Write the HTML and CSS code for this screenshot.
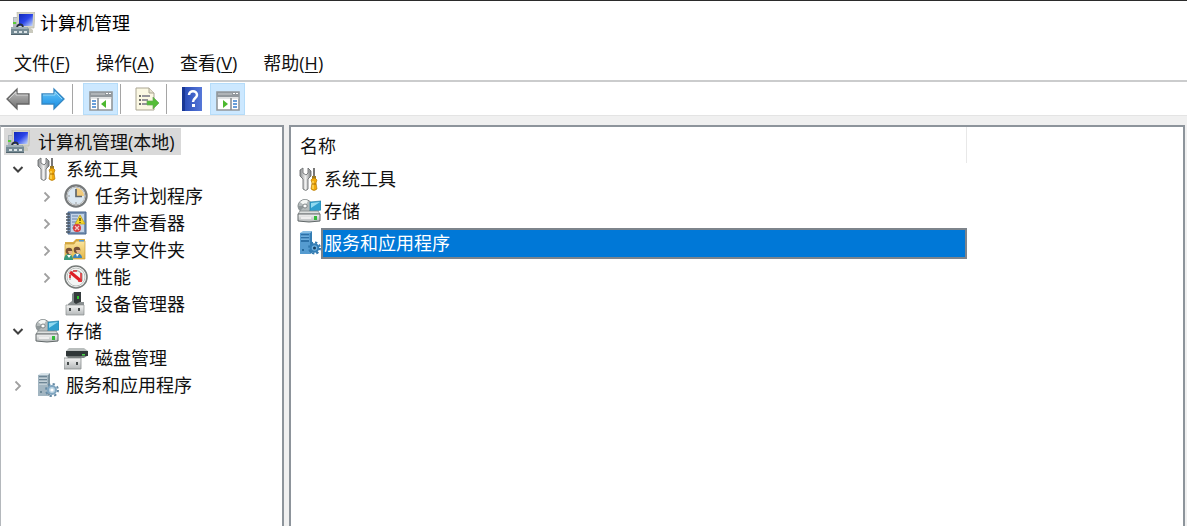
FILE: index.html
```html
<!DOCTYPE html>
<html lang="zh-CN">
<head>
<meta charset="utf-8">
<title>计算机管理</title>
<link rel="stylesheet" href="styles.css">
</head>
<body>
<svg class="defs" aria-hidden="true">
  <defs>
    <linearGradient id="gray" x1="0" y1="0" x2="0" y2="1"><stop offset="0" stop-color="#c4c4c4"/><stop offset="1" stop-color="#6d6d6d"/></linearGradient>
    <linearGradient id="blue" x1="0" y1="0" x2="0" y2="1"><stop offset="0" stop-color="#6cc8f8"/><stop offset="1" stop-color="#128be4"/></linearGradient>
    <linearGradient id="screen" x1="0" y1="0" x2="1" y2="1"><stop offset="0" stop-color="#1028b8"/><stop offset=".5" stop-color="#2b45e8"/><stop offset="1" stop-color="#c8dcff"/></linearGradient>
    <linearGradient id="steel" x1="0" y1="0" x2="1" y2="0"><stop offset="0" stop-color="#8b8e90"/><stop offset=".5" stop-color="#f1f1f1"/><stop offset="1" stop-color="#777b7d"/></linearGradient>
    <linearGradient id="case" x1="0" y1="0" x2="0" y2="1"><stop offset="0" stop-color="#f4f4f4"/><stop offset="1" stop-color="#b4b8b9"/></linearGradient>
    <linearGradient id="help" x1="0" y1="0" x2="1" y2="0"><stop offset="0" stop-color="#2447b4"/><stop offset="1" stop-color="#5677d8"/></linearGradient>
    <linearGradient id="folder" x1="0" y1="0" x2="0" y2="1"><stop offset="0" stop-color="#fbe6a0"/><stop offset="1" stop-color="#e5b749"/></linearGradient>
  </defs>
  <symbol id="i-computer" viewBox="0 0 24 24">
    <path d="M6 0h18l-1 16H7z" fill="#d5d4c8" stroke="#b2b1a6" stroke-width=".6"/>
    <path d="M8 2h14l-.5 12H8z" fill="url(#screen)"/>
    <path d="M2 5h4v11H2z" fill="#aeb5b9"/><path d="M3 7h3M3 9h3" stroke="#e2e7e9"/><path d="M2 10h3v2H2z" fill="#58cf35"/>
    <path d="M6 16c0-4 5-5 6-1" fill="none" stroke="#28313c" stroke-width="1.800"/>
    <path d="M13 15h5l4 3v3h-7z" fill="#c9c9bd"/>
    <path d="M0 15h16l2 2v6H0z" fill="#758a94"/><path d="M0 15h16l1 2H0z" fill="#9fb0b7"/>
    <path d="M3 19h3v2H3zM8 19h3v2H8zM13 19h3v2h-3z" fill="#dce4e6"/><path d="M0 22.500h18" stroke="#52656e"/>
  </symbol>
  <symbol id="i-tools" viewBox="0 0 24 24">
    <path d="M6 1 3 3v6l3 3v10q3 3 5 0V12l3-3V4l-3-3v5L9 8 6 6z" fill="url(#steel)" stroke="#6d7072" stroke-width=".9"/>
    <path d="M16 1h2v10h-2z" fill="#777"/><path d="M15 9h4v3h-4z" fill="#9b7b28"/>
    <path d="M14 13q3-4 6 0l-1 3 1 6q-3 3-6 0l1-6z" fill="#f2aa0b" stroke="#b47b08" stroke-width=".7"/><path d="M16 14v8" stroke="#ffe16b" stroke-width="1.300"/><path d="M15 17h4" stroke="#a96d00"/>
  </symbol>
  <symbol id="i-clock" viewBox="0 0 24 24">
    <circle cx="12" cy="12" r="10.600" fill="#f3f4f3" stroke="#777a7b" stroke-width="2.200"/><circle cx="12" cy="12" r="8.800" fill="#dce8f2" stroke="#b8babb"/>
    <path d="M12 4a8 8 0 0 1 8 8h-8z" fill="#f2cb7c"/><path d="M12 5v7.500h6" fill="none" stroke="#62676b" stroke-width="1.700"/><path d="M12 18v2M4 12h2" stroke="#999"/>
  </symbol>
  <symbol id="i-event" viewBox="0 0 24 24">
    <path d="M4 1h18v22H4z" fill="#7993b4" stroke="#44648e"/><path d="M7 3h13v18H7z" fill="#c3d4e9"/>
    <path d="M8 5h6M8 8h5M8 11h5M8 14h4M8 17h4" stroke="#6984aa"/>
    <path d="M2 3h4M2 6h4M2 9h4M2 12h4M2 15h4M2 18h4M2 21h4" stroke="#4b5560" stroke-width="1.300"/>
    <path d="m16 4 5 9H11z" fill="#f7d72c" stroke="#b59a14" stroke-width=".7"/><path d="M16 7v3M16 11v1" stroke="#54480b" stroke-width="1.400"/>
    <circle cx="13" cy="17" r="4" fill="#d83a3d"/><path d="m11 15 4 4m0-4-4 4" stroke="#f3c6c6" stroke-width="1.200"/>
  </symbol>
  <symbol id="i-share" viewBox="0 0 24 24">
    <path d="M1 4h8l3-3h9v20H1z" fill="#d9ad45"/><path d="M1 6h9l2-3h9v18H1z" fill="url(#folder)" stroke="#c79b37" stroke-width=".7"/><path d="M15 2h5v1.500h-5z" fill="#4f9bd8"/>
    <path d="M0 22c0-8 9-8 9 0z" fill="#3a9a7b"/><path d="M9 20c0-6 9-6 9 0z" fill="#3c83b8"/><circle cx="5" cy="13" r="3.300" fill="#765137"/><circle cx="13" cy="12" r="3.300" fill="#765137"/><path d="M4 13h4v3H5zM12 12h4v3h-3z" fill="#e9b68d"/><path d="m3 17 2 3 2-3M12 16l1 3 2-3" fill="#fff"/>
  </symbol>
  <symbol id="i-perf" viewBox="0 0 24 24">
    <circle cx="12" cy="12" r="11" fill="#fff" stroke="#777c7a" stroke-width="1.600"/><circle cx="12" cy="12" r="9" fill="#f4f6f4" stroke="#b9bebb"/>
    <path d="M6 15V9q6-7 12 0v7" fill="none" stroke="#9b9f9d" stroke-width="1.200"/>
    <path d="m6 7 11 9" stroke="#df1f25" stroke-width="3.200"/><path d="M6 10v3M9 6h4M17 8v9M14 16h4" stroke="#df3438" stroke-width="1.600"/>
  </symbol>
  <symbol id="i-device" viewBox="0 0 24 24">
    <path d="M10 0h7v13h-7z" fill="#353b3c"/><path d="M10 0 8 2v11h2z" fill="#80898a"/><path d="M13 4h2v3h-2z" fill="#2fc72b"/>
    <path d="m4 12 4-3 4 3v3H4zM12 12l4-2h4v5h-8z" fill="#8a9091"/><path d="M2 13h18v10H2z" fill="url(#case)" stroke="#888d8e" stroke-width=".7"/><path d="M5 16h2v3H5zM14 16h2v3h-2z" fill="#464b4c"/>
  </symbol>
  <symbol id="i-storage" viewBox="0 0 24 24">
    <ellipse cx="8" cy="7" rx="7" ry="6.500" fill="#b4babb" stroke="#858c8e"/><path d="M8 7 3 3q5-4 8-1z" fill="#f4f6f4"/><path d="m8 7-5 5q-2-2-2-5z" fill="#8f9799"/><ellipse cx="8" cy="7" rx="2.200" ry="2" fill="#fff" stroke="#7d8486"/>
    <path d="M13 3 24 2v9l-11 2z" fill="#2f9fce" stroke="#2a84a7" stroke-width=".7"/><path d="m14 4 9-1-9 6z" fill="#91daf0"/>
    <path d="m3 12-2 3h22l-2-3z" fill="#dce0df" stroke="#858c8b" stroke-width=".8"/><path d="M1 15h22v7q-11 2-22 0z" fill="url(#case)" stroke="#62696a"/><path d="M4 18h10v2H4z" fill="#eee"/><path d="M17 17h3v4h-3z" fill="#34b93b"/>
  </symbol>
  <symbol id="i-disk" viewBox="0 0 24 24">
    <path d="m5 2-3 3h22l-4-3z" fill="#b9bebd"/><path d="M2 5h22v5H2z" fill="#303738"/><path d="M2 10h21l-3 2H4z" fill="#7f8887"/><path d="M18 8h3v1.500h-3z" fill="#4bd44c"/>
    <path d="M4 10h13v4H4z" fill="#707675"/><path d="M0 12h17v11H0z" fill="url(#case)" stroke="#898e8d" stroke-width=".8"/><path d="M3 16h2v3H3zM12 16h2v3h-2z" fill="#454b4b"/>
  </symbol>
  <symbol id="i-service" viewBox="0 0 24 24">
    <path d="M3 2 6 0h9l-2 2z" fill="#d8e3e9"/><path d="M3 2h10v21H3z" fill="#a2b5c1"/><path d="m13 2 2-2v22l-2 1z" fill="#7c929e"/><path d="M4 4h8M4 7h8M4 10h8" stroke="#5c7686" stroke-width="1.300"/><path d="M4 5h8M4 8h8M4 11h8" stroke="#e0e9ed"/><path d="M5 18h2v2H5z" fill="#6b8796"/>
    <circle cx="17" cy="17" r="6" fill="none" stroke="#668ba5" stroke-width="2" stroke-dasharray="2.300 2.400"/><circle cx="17" cy="17" r="4" fill="#bcd4e3" stroke="#7fa5c0" stroke-width="2"/><circle cx="17" cy="17" r="1.600" fill="#fff"/>
  </symbol>
  <symbol id="i-service-selected" viewBox="0 0 24 24">
    <path d="M3 2 6 0h9l-2 2z" fill="#8abfe4"/><path d="M3 2h10v21H3z" fill="#559bd0"/><path d="m13 2 2-2v22l-2 1z" fill="#347db4"/><path d="M4 4h8M4 7h8M4 10h8" stroke="#20649b" stroke-width="1.300"/><path d="M4 5h8M4 8h8" stroke="#82bfea"/><path d="M5 18h2v2H5z" fill="#26699c"/>
    <circle cx="17.500" cy="17" r="5.500" fill="none" stroke="#3279ae" stroke-width="2" stroke-dasharray="2.300 2"/><circle cx="17.500" cy="17" r="3.800" fill="#6eb0df" stroke="#337db5" stroke-width="2"/><circle cx="17.500" cy="17" r="1.500" fill="#163e60"/>
  </symbol>
  <symbol id="i-open" viewBox="0 0 12 12"><path d="m1.500 4 4.500 4.500 4.500-4.500" fill="none" stroke="#404040" stroke-width="2"/></symbol>
  <symbol id="i-closed" viewBox="0 0 12 12"><path d="m3.500 2.500 4.500 4.500-4.500 4.500" fill="none" stroke="#a0a0a0" stroke-width="1.800"/></symbol>
</svg>

<div class="window">
  <header class="titlebar">
    <svg class="icon"><use href="#i-computer"/></svg>
    <h1 class="title">计算机管理</h1>
  </header>
  <nav class="menubar" aria-label="菜单">
    <button class="menu">文件(<u>F</u>)</button>
    <button class="menu">操作(<u>A</u>)</button>
    <button class="menu">查看(<u>V</u>)</button>
    <button class="menu">帮助(<u>H</u>)</button>
  </nav>
  <div class="toolbar" role="toolbar" aria-label="工具栏">
    <button class="tool" aria-label="后退"><svg class="icon" viewBox="0 0 24 24"><path d="M1 12 11 2v5h12v10H11v5z" fill="url(#gray)" stroke="#656565" stroke-width="1.300"/><path d="M3 12 10 5v3h12" fill="none" stroke="#ddd" stroke-width=".8"/></svg></button>
    <button class="tool" aria-label="前进"><svg class="icon" viewBox="0 0 24 24"><path d="M23 12 13 2v5H1v10h12v5z" fill="url(#blue)" stroke="#3587c2" stroke-width="1.300"/><path d="M2 8h12V5l7 7" fill="none" stroke="#a8e1fb" stroke-width=".8"/></svg></button>
    <span class="separator"></span>
    <button class="tool pressed" aria-label="显示/隐藏控制台树" aria-pressed="true"><svg class="icon" viewBox="0 -2 24 24"><path d="M1 3h22v18H1z" fill="#fff" stroke="#92979a" stroke-width="1.600"/><path d="M1 3h22v5H1z" fill="#92989d"/><path d="M2 5h14" stroke="#cdd0d2"/><path d="M17 4h2v1h-2zM20 4h2v1h-2z" fill="#fff"/><path d="M1 9h22" stroke="#c4c7c9"/><path d="M9 9v12" stroke="#858a8e" stroke-width="1.500"/><path d="M3 12h4M3 15h4M3 18h4" stroke="#397fcb" stroke-width="1.500"/><path d="M17 11v8l-5-4z" fill="#4bb82f"/></svg></button>
    <span class="separator"></span>
    <button class="tool export" aria-label="导出列表"><svg class="icon" viewBox="0 0 24 24"><path d="M1 1h13l5 5v17H1z" fill="#fbf8e3" stroke="#aaa593"/><path d="M14 1v5h5" fill="#e5e1ce" stroke="#aaa593"/><path d="M4 9h2M4 13h2M4 17h2" stroke="#444" stroke-width="1.300"/><path d="M7 9h8M7 13h6M7 17h6" stroke="#777483" stroke-width="1.300"/><path d="M12 14h6v-4l6 6-6 6v-4h-6z" fill="#55bd38" stroke="#69a858" stroke-width=".7"/></svg></button>
    <span class="separator"></span>
    <button class="tool help" aria-label="帮助"><svg class="icon" viewBox="0 0 24 24"><path d="M2 0h20v24H2z" fill="url(#help)"/><path d="M2 0h3v24H2z" fill="#193795"/><path d="M9 8c0-5 8-5 8 0 0 3-4 3-4 7" fill="none" stroke="#fff" stroke-width="2.500"/><path d="M12 17h3v3h-3z" fill="#fff"/></svg></button>
    <button class="tool pressed" aria-label="显示/隐藏操作窗格" aria-pressed="true"><svg class="icon" viewBox="0 -2 24 24"><path d="M1 3h22v18H1z" fill="#fff" stroke="#92979a" stroke-width="1.600"/><path d="M1 3h22v5H1z" fill="#92989d"/><path d="M2 5h14" stroke="#cdd0d2"/><path d="M17 4h2v1h-2zM20 4h2v1h-2z" fill="#fff"/><path d="M1 9h22" stroke="#c4c7c9"/><path d="M15 9v12" stroke="#858a8e" stroke-width="1.500"/><path d="M17 12h4M17 15h4M17 18h4" stroke="#397fcb" stroke-width="1.500"/><path d="M7 11v8l5-4z" fill="#4bb82f"/></svg></button>
  </div>

  <main class="panes">
    <nav class="pane tree" aria-label="控制台树">
      <button class="node root selected"><svg class="icon"><use href="#i-computer"/></svg><span class="label">计算机管理(本地)</span></button>
      <ul class="branch">
        <li>
          <button class="node"><svg class="chevron"><use href="#i-open"/></svg><svg class="icon"><use href="#i-tools"/></svg><span class="label">系统工具</span></button>
          <ul class="branch nested">
            <li><button class="node"><svg class="chevron"><use href="#i-closed"/></svg><svg class="icon"><use href="#i-clock"/></svg><span class="label">任务计划程序</span></button></li>
            <li><button class="node"><svg class="chevron"><use href="#i-closed"/></svg><svg class="icon"><use href="#i-event"/></svg><span class="label">事件查看器</span></button></li>
            <li><button class="node"><svg class="chevron"><use href="#i-closed"/></svg><svg class="icon"><use href="#i-share"/></svg><span class="label">共享文件夹</span></button></li>
            <li><button class="node"><svg class="chevron"><use href="#i-closed"/></svg><svg class="icon"><use href="#i-perf"/></svg><span class="label">性能</span></button></li>
            <li><button class="node"><span class="chevron"></span><svg class="icon"><use href="#i-device"/></svg><span class="label">设备管理器</span></button></li>
          </ul>
        </li>
        <li>
          <button class="node"><svg class="chevron"><use href="#i-open"/></svg><svg class="icon"><use href="#i-storage"/></svg><span class="label">存储</span></button>
          <ul class="branch nested">
            <li><button class="node"><span class="chevron"></span><svg class="icon"><use href="#i-disk"/></svg><span class="label">磁盘管理</span></button></li>
          </ul>
        </li>
        <li><button class="node"><svg class="chevron"><use href="#i-closed"/></svg><svg class="icon"><use href="#i-service"/></svg><span class="label">服务和应用程序</span></button></li>
      </ul>
    </nav>
    <section class="pane content">
      <table class="list">
        <thead><tr><th scope="col">名称</th></tr></thead>
        <tbody>
          <tr><td><div class="item"><svg class="icon"><use href="#i-tools"/></svg><span class="name">系统工具</span></div></td></tr>
          <tr><td><div class="item"><svg class="icon"><use href="#i-storage"/></svg><span class="name">存储</span></div></td></tr>
          <tr aria-selected="true"><td><div class="item current"><svg class="icon"><use href="#i-service-selected"/></svg><span class="name">服务和应用程序</span></div></td></tr>
        </tbody>
      </table>
    </section>
  </main>
</div>
</body>
</html>
```
FILE: styles.css
```css
* { box-sizing: border-box; }

body {
  margin: 0;
  font: 18px/27px "Open Sans", "Noto Sans CJK SC", sans-serif;
  color: #111;
  background: #fff;
}

button {
  font: inherit;
  color: inherit;
  border: 0;
  padding: 0;
  background: none;
}

ul { list-style: none; margin: 0; padding: 0; }

.defs { position: absolute; width: 0; height: 0; }

.icon { flex: none; display: block; width: 24px; height: 24px; }

.window {
  display: flex;
  flex-direction: column;
  min-height: 100vh;
  border-top: 1px solid #2b2b2b;
}

.titlebar {
  display: flex;
  align-items: center;
  gap: 5px;
  height: 45px;
  padding-left: 11px;
}

.title { margin: 0; font-size: 18px; font-weight: 400; color: #000; }

.menubar {
  display: flex;
  align-items: center;
  gap: 26px;
  height: 36px;
  padding: 1px 0 0 14px;
  border-bottom: 2px solid #cbcccd;
}

.menu u { text-underline-offset: 2px; text-decoration-thickness: 1px; }

.toolbar {
  display: flex;
  align-items: center;
  height: 34px;
  padding-top: 1px;
  border-bottom: 1px solid #e4e4e4;
}

.tool {
  display: flex;
  align-items: center;
  justify-content: center;
  width: 35px;
  height: 32px;
}

.pressed { background: #cce8ff; border: 1px solid #b5dcf9; }

.separator { width: 1px; height: 30px; margin: 0 2px; background: #a5a5a5; }
.separator + .pressed { margin-left: 8px; }
.export { margin-left: 6px; }
.help { margin: 0 1px 0 5px; }

.panes {
  flex: 1;
  display: flex;
  gap: 5px;
  padding: 9px 2px 0 0;
  background: #f0f0f0;
}

.pane {
  background: #fff;
  border: 2px solid #8d949b;
  border-bottom: 0;
}

.tree { flex: 0 0 284px; padding-top: 1px; border-left: 1px solid #b4b8bc; }

.content { flex: 1; }

.node { display: flex; align-items: center; height: 27px; text-align: left; white-space: nowrap; }
.node .icon { margin-right: 7px; }
.label { padding-top: 2px; }
.root { margin-left: 3px; padding: 0 6px 0 2px; }
.root .icon { margin-right: 8px; }
.selected { background: #d9d9d9; }

.branch { padding-left: 11px; }
.nested { padding-left: 29px; }

.chevron { flex: none; width: 12px; height: 12px; margin-right: 11px; }

.list { width: 676px; border-collapse: collapse; }

.list th {
  height: 36px;
  padding: 3px 0 0 9px;
  font-weight: 400;
  text-align: left;
  border-right: 1px solid #e8e8e8;
}

.list td { padding: 0; }

.item { display: flex; align-items: center; height: 32px; padding-left: 6px; }
.name { flex: 1; padding-left: 1px; border: 2px solid transparent; }
.current .name { color: #fff; background: #0078d7; border-color: #7d848b; }
```
